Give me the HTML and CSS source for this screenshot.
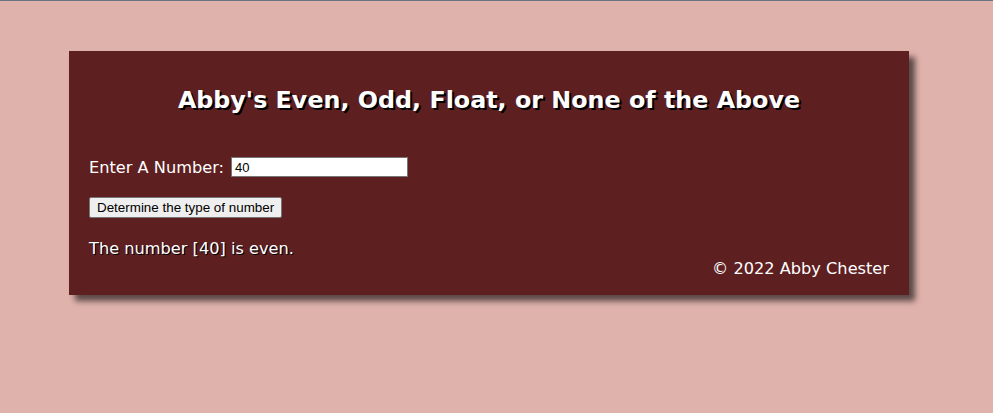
FILE: index.html
```html
<!DOCTYPE html>
<html>
<head>
<meta charset="utf-8">
<link rel="stylesheet" href="styles.css">
</head>
<body>
<div class="topline"></div>
<main class="card">
  <h1 class="title">Abby's Even, Odd, Float, or None of the Above</h1>
  <div class="row">
    <label class="label" for="num">Enter A Number:</label>
    <input class="field" id="num" type="text" value="40">
  </div>
  <div class="row-btn">
    <button class="btn">Determine the type of number</button>
  </div>
  <p class="result">The number [40] is even.</p>
  <footer class="footer">© 2022 Abby Chester</footer>
</main>
</body>
</html>
```
FILE: styles.css
```css
html, body {
  margin: 0;
  padding: 0;
  background: #e0b2ac;
  height: 100%;
}
body {
  font-family: "DejaVu Sans", Verdana, sans-serif;
}
.topline {
  height: 1px;
  background: #6b7383;
}
.card {
  box-sizing: border-box;
  width: 840px;
  height: 244px;
  margin: 50px 0 0 69px;
  background: #5e1f21;
  box-shadow: 6px 6px 6px rgba(0,0,0,0.6);
  padding: 35px 20px 0 20px;
  color: #fff;
  display: flex;
  flex-direction: column;
}
.title {
  margin: 0;
  text-align: center;
  font-size: 23.8px;
  font-weight: bold;
  line-height: 28px;
  text-shadow: 2px 2px 0 #000;
}
.row {
  margin-top: 43px;
  display: flex;
  align-items: center;
  gap: 7px;
  height: 20px;
}
.label {
  font-size: 16.2px;
}
.field {
  box-sizing: border-box;
  width: 177px;
  height: 20px;
  margin: 0;
  padding: 1px 3px;
  border: 1px solid #767676;
  font-family: "Liberation Sans", Arial, sans-serif;
  font-size: 13px;
  color: #000;
  background: #fff;
}
.row-btn {
  margin-top: 20px;
  height: 21px;
}
.btn {
  box-sizing: border-box;
  height: 21px;
  padding: 1px 7px;
  margin: 0;
  border: 1px solid #767676;
  border-radius: 2px;
  background: #efefef;
  font-family: "Liberation Sans", Arial, sans-serif;
  font-size: 13.4px;
  color: #000;
}
.result {
  margin: 21px 0 0 0;
  font-size: 16.2px;
  line-height: 20px;
  text-shadow: 1px 1px 0 #000;
}
.footer {
  text-align: right;
  font-size: 16.2px;
  line-height: 20px;
  margin-top: 0;
}
```
